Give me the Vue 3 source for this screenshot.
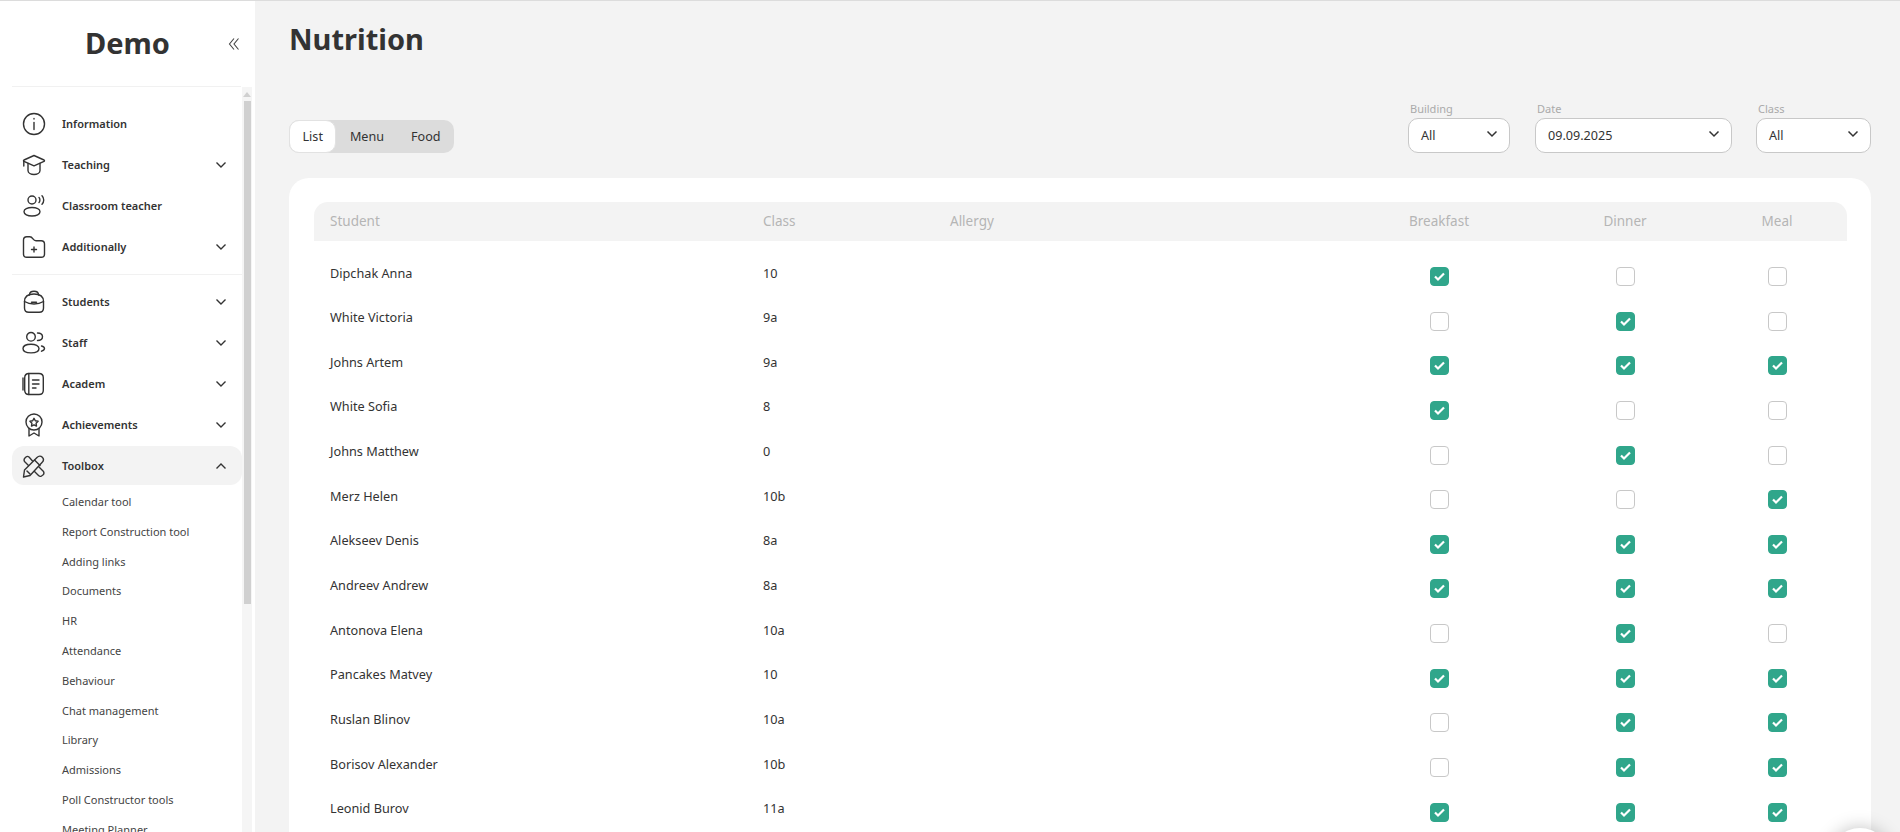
<script setup>
const icons = {
  info: ['M12 1.500a10.500 10.500 0 1 0 0 21a10.500 10.500 0 1 0 0-21z', 'M12 10.500v7', 'M12 6.500v.6'],
  teaching: ['M12 2.500l10 4.500q1 .7 0 1.300L12 12.800L2 8.300q-1-.6 0-1.300z', 'M6 10.500v7c0 2.500 3 4 6 4s6-1.500 6-4v-7', 'M1.800 8v5'],
  classroom: ['M10 2a4 4 0 1 0 0 8a4 4 0 1 0 0-8z', 'M10 13.500c-4.500 0-8 1.700-8 4.200s3.500 4.300 8 4.300s8-1.800 8-4.300s-3.500-4.200-8-4.200z', 'M17 3.500c1.200 1.200 1.200 3.800 0 5', 'M20 1.800c2.300 2.200 2.300 6.200 0 8.400'],
  folder: ['M1.500 5c0-2 1-3.300 3.300-3.300h3c1.700 0 2.300.9 3.200 2.200s1.500 1.800 3 1.800h5.200c2.300 0 3.300 1 3.300 3.300V19c0 2.200-1 3.300-3.300 3.300H4.800c-2.300 0-3.300-1.100-3.300-3.300z', 'M12 12v5', 'M9.500 14.500h5'],
  students: ['M2.500 11.500c0-5 3.500-7.500 9.500-7.500s9.500 2.500 9.500 7.500v6.500c0 2.800-1.500 4.300-4.300 4.300H6.800c-2.800 0-4.300-1.500-4.300-4.300z', 'M7.500 5c0-2.300 1.800-3.700 4.500-3.700s4.500 1.400 4.500 3.700', 'M2.500 11.500c3 1.800 6 2.500 9.500 2.500s6.500-.7 9.500-2.500', 'M9.500 12.300h5'],
  staff: ['M9 1.500a4.300 4.300 0 1 0 0 8.600a4.300 4.300 0 1 0 0-8.600z', 'M9 13.300c-4.500 0-8 1.500-8 4.300s3.500 4.300 8 4.300s8-1.500 8-4.300s-3.500-4.300-8-4.300z', 'M15.500 2c3 0 5 1.500 5 3.800s-2 3.700-5 3.700', 'M19.500 15c1.800.5 3 1.400 3 2.600s-1.200 2.100-3 2.600'],
  academ: ['M7 1.500h10c2.800 0 4.300 1.500 4.300 4.300v12.400c0 2.800-1.500 4.300-4.300 4.300H7c-2.800 0-4.300-1.500-4.300-4.300V5.800C2.700 3 4.200 1.500 7 1.500z', 'M6.800 1.500v21', 'M1 6v12', 'M10.500 8h6.500', 'M10.500 12h6.500', 'M10.500 16h3.500'],
  medal: ['M12 1a8 8 0 1 0 0 16a8 8 0 1 0 0-16z', 'M12 5.300l1.300 2.500l2.800.5l-2 2l.4 2.800l-2.500-1.300l-2.500 1.300l.4-2.800l-2-2l2.800-.5z', 'M7 15.500v7.500l5-3l5 3v-7.500'],
  tools: ['M2.500 16L15 3.500c1.800-1.800 3.800-1.800 5.300-.3s1.500 3.500-.3 5.300L8 21.500l-6.500 1.500z', 'M12.500 6l5.500 5.500', 'M5 17l3 3', 'M10.500 7L7 3Q5.500 1.800 4 3L2.500 4.500Q1.500 6 2.500 7.500L6.500 11.500', 'M17 13L21.500 17.500Q22.500 19 21.500 20.500L19.500 22Q18 23 16.500 21.500L12.500 17.500']
}

const topMenu = [
  { label: 'Information', icon: 'info' },
  { label: 'Teaching', icon: 'teaching', arrow: true },
  { label: 'Classroom teacher', icon: 'classroom' },
  { label: 'Additionally', icon: 'folder', arrow: true }
]
const mainMenu = [
  { label: 'Students', icon: 'students', arrow: true },
  { label: 'Staff', icon: 'staff', arrow: true },
  { label: 'Academ', icon: 'academ', arrow: true },
  { label: 'Achievements', icon: 'medal', arrow: true },
  { label: 'Toolbox', icon: 'tools', arrow: true, open: true }
]
const subMenu = [
  'Calendar tool', 'Report Construction tool', 'Adding links', 'Documents', 'HR', 'Attendance',
  'Behaviour', 'Chat management', 'Library', 'Admissions', 'Poll Constructor tools', 'Meeting Planner'
]

const filters = [
  { label: 'Building', value: 'All', cls: 'f-building' },
  { label: 'Date', value: '09.09.2025', cls: 'f-date' },
  { label: 'Class', value: 'All', cls: 'f-class' }
]

const rows = [
  ['Dipchak Anna', '10', 1, 0, 0],
  ['White Victoria', '9a', 0, 1, 0],
  ['Johns Artem', '9a', 1, 1, 1],
  ['White Sofia', '8', 1, 0, 0],
  ['Johns Matthew', '0', 0, 1, 0],
  ['Merz Helen', '10b', 0, 0, 1],
  ['Alekseev Denis', '8a', 1, 1, 1],
  ['Andreev Andrew', '8a', 1, 1, 1],
  ['Antonova Elena', '10a', 0, 1, 0],
  ['Pancakes Matvey', '10', 1, 1, 1],
  ['Ruslan Blinov', '10a', 0, 1, 1],
  ['Borisov Alexander', '10b', 0, 1, 1],
  ['Leonid Burov', '11a', 1, 1, 1]
]
</script>

<template>
  <div class="page">
    <aside class="sidebar">
      <div class="brand">
        <span class="brand-name">Demo</span>
        <svg class="collapse" width="12" height="14" viewBox="0 0 12 14"><path d="M6 1.500L1.500 7L6 12.500M10.500 1.500L6 7L10.500 12.500" /></svg>
      </div>
      <div class="side-body">
        <nav class="nav">
          <div class="group top-group">
            <div v-for="item in topMenu" :key="item.label" class="nav-item">
              <svg class="nav-icon" width="24" height="24" viewBox="0 0 24 24"><path v-for="d in icons[item.icon]" :key="d" :d="d" /></svg>
              <span class="nav-label">{{ item.label }}</span>
              <svg v-if="item.arrow" class="arrow" width="12" height="8" viewBox="0 0 12 8"><path d="M1.500 1.500L6 6L10.500 1.500" /></svg>
            </div>
          </div>
          <div class="group">
            <div v-for="item in mainMenu" :key="item.label" class="nav-item" :class="{ open: item.open }">
              <svg class="nav-icon" width="24" height="24" viewBox="0 0 24 24"><path v-for="d in icons[item.icon]" :key="d" :d="d" /></svg>
              <span class="nav-label">{{ item.label }}</span>
              <svg class="arrow" width="12" height="8" viewBox="0 0 12 8"><path :d="item.open ? 'M1.500 6.500L6 2L10.500 6.500' : 'M1.500 1.500L6 6L10.500 1.500'" /></svg>
            </div>
            <div class="sub-list">
              <a v-for="s in subMenu" :key="s" class="sub-item">{{ s }}</a>
            </div>
          </div>
        </nav>
        <div class="scroll-track">
          <span class="scroll-up"></span>
          <span class="scroll-thumb"></span>
        </div>
      </div>
    </aside>

    <main class="content">
      <h1 class="title">Nutrition</h1>

      <div class="toolbar">
        <div class="tabs">
          <span class="tab active">List</span>
          <span class="tab">Menu</span>
          <span class="tab">Food</span>
        </div>
        <div class="filters">
          <div v-for="f in filters" :key="f.label" class="filter" :class="f.cls">
            <label>{{ f.label }}</label>
            <div class="select">
              <span>{{ f.value }}</span>
              <svg width="12" height="8" viewBox="0 0 12 8"><path d="M1.500 1.500L6 6L10.500 1.500" /></svg>
            </div>
          </div>
        </div>
      </div>

      <section class="card">
        <div class="row head">
          <span>Student</span>
          <span>Class</span>
          <span>Allergy</span>
          <span class="mid">Breakfast</span>
          <span class="mid">Dinner</span>
          <span class="mid">Meal</span>
        </div>
        <div class="body">
          <div v-for="r in rows" :key="r[0]" class="row">
            <span>{{ r[0] }}</span>
            <span>{{ r[1] }}</span>
            <span></span>
            <span v-for="(c, i) in r.slice(2)" :key="i" class="mid">
              <span class="check" :class="{ on: c }">
                <svg v-if="c" width="13" height="11" viewBox="0 0 13 11"><path d="M2 5.500L5 8.500L11 2.500" /></svg>
              </span>
            </span>
          </div>
        </div>
      </section>
    </main>

    <div class="fab"></div>
  </div>
</template>

<style scoped>
.page {
  position: relative;
  display: flex;
  height: 832px;
  overflow: hidden;
  background: #f3f3f3;
  border-top: 1px solid #dcdcdc;
  box-sizing: border-box;
  font-family: "Noto Sans", sans-serif;
  color: #333;
}

/* SIDEBAR */
.sidebar {
  width: 255px;
  flex-shrink: 0;
  background: #fff;
  display: flex;
  flex-direction: column;
}
.brand {
  position: relative;
  height: 86px;
  margin: 0 14px 0 12px;
  flex-shrink: 0;
  display: flex;
  align-items: center;
  justify-content: center;
  border-bottom: 1px solid #f1f1f1;
  box-sizing: border-box;
}
.brand-name { font-size: 29px; font-weight: 700; margin-left: 2px; margin-top: -3px; }
.collapse { position: absolute; right: 1px; top: 36px; }
.collapse path { fill: none; stroke: #444; stroke-width: 1.1; }

.side-body { flex: 1; display: flex; min-height: 0; padding-right: 3px; }
.nav { flex: 1; min-width: 0; padding: 16px 0 0 12px; overflow: hidden; }
.group.top-group { border-bottom: 1px solid #f1f1f1; padding-bottom: 7px; margin-bottom: 6px; }

.nav-item {
  height: 41px;
  display: flex;
  align-items: center;
  padding: 0 15px 0 10px;
  border-radius: 12px;
  box-sizing: border-box;
}
.nav-item.open { height: 39px; margin: 1px 0; background: #f3f3f3; }
.nav-icon { flex-shrink: 0; margin-right: 16px; }
.nav-icon path { fill: none; stroke: #333; stroke-width: 1.4; stroke-linecap: round; stroke-linejoin: round; }
.nav-label { flex: 1; font-size: 11px; font-weight: 600; }
.arrow path { fill: none; stroke: #333; stroke-width: 1.4; }

.sub-list { display: flex; flex-direction: column; padding: 1px 0 0 50px; }
.sub-item { height: 29.8px; line-height: 29.8px; font-size: 11px; white-space: nowrap; color: #444; }

.scroll-track { width: 10px; flex-shrink: 0; background: #f5f5f5; display: flex; flex-direction: column; align-items: center; }
.scroll-up { margin-top: 5px; border: 4px solid transparent; border-top: 0; border-bottom: 5px solid #d0d0d0; }
.scroll-thumb { width: 7px; height: 503px; margin-top: 4px; background: #d0d0d0; }

/* CONTENT */
.content { flex: 1; min-width: 0; padding: 0 29px 0 34px; }
.title { margin: 18px 0 0; font-size: 29px; line-height: 39px; font-weight: 700; color: #333; }

.toolbar { display: flex; align-items: flex-end; justify-content: space-between; margin-top: 49px; height: 46px; }
.tabs { display: flex; height: 33px; background: #dcdcdc; border-radius: 10px; font-size: 12.6px; }
.tab { display: flex; align-items: center; padding: 0 13.500px; }
.tab.active { background: #fff; border-radius: 10px; border: 1px solid #e2e2e2; padding: 0 12.500px; }

.filters { display: flex; gap: 24px; }
.filter label { display: block; padding-left: 2px; font-size: 11px; line-height: 14px; color: #aaa; }
.f-building { width: 102px; margin-right: 1px; }
.f-date { width: 197px; }
.f-class { width: 115px; }
.select {
  height: 35px;
  margin-top: 2px;
  padding: 0 11px 0 12px;
  display: flex;
  align-items: center;
  justify-content: space-between;
  background: #fff;
  border: 1px solid #c8c8c8;
  border-radius: 10px;
  font-size: 12.6px;
  box-sizing: border-box;
}
.select svg { margin-top: -3px; }
.select path { fill: none; stroke: #333; stroke-width: 1.5; }

.card {
  margin-top: 25px;
  padding: 24px 24px 0 25px;
  background: #fff;
  border-radius: 20px;
  height: 700px;
}
.row {
  display: grid;
  grid-template-columns: 449px 187px 385px 208px 164px 140px;
  font-size: 12.7px;
}
.row > span:first-child { padding-left: 16px; }
.row > .mid { text-align: center; }
.head {
  height: 39px;
  padding-bottom: 2px;
  box-sizing: border-box;
  align-items: center;
  background: #f3f3f3;
  border-radius: 14px 14px 0 0;
  font-size: 13.5px;
  color: #b5b5b5;
}
.body { padding-top: 10px; }
.body .row { height: 44.65px; align-items: start; padding-top: 12.500px; box-sizing: border-box; line-height: 18px; }

.check {
  display: inline-flex;
  align-items: center;
  justify-content: center;
  width: 19px;
  height: 19px;
  margin-top: 3.500px;
  background: #fff;
  border: 1px solid #c8c8c8;
  border-radius: 4px;
  box-sizing: border-box;
  vertical-align: top;
}
.check.on { background: #30a68b; border-color: #30a68b; }
.check path { fill: none; stroke: #fff; stroke-width: 2.2; }

.fab {
  position: absolute;
  left: 1830px;
  top: 827px;
  width: 60px;
  height: 60px;
  background: #fff;
  border-radius: 50%;
  box-shadow: 0 0 18px rgba(0, 0, 0, 0.25);
}
</style>
